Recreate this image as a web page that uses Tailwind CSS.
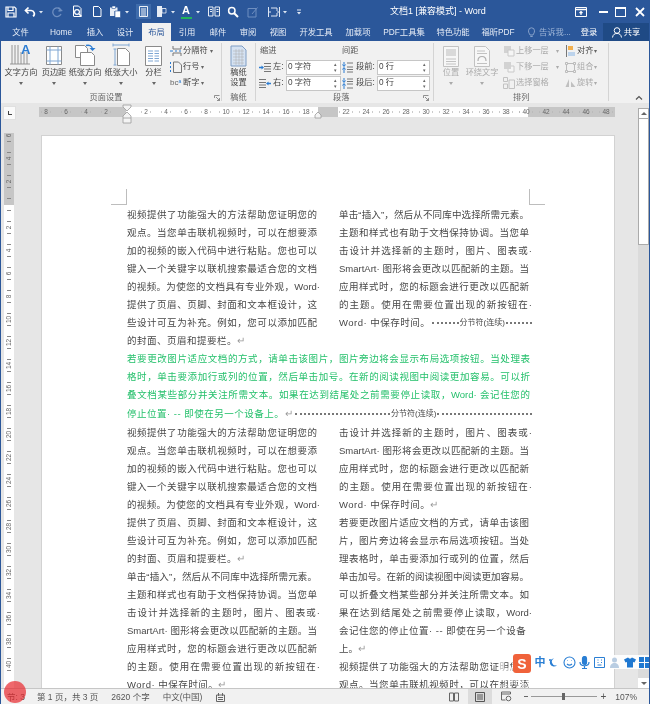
<!DOCTYPE html>
<html lang="zh-CN">
<head>
<meta charset="utf-8">
<title>文档1 - Word</title>
<script src="https://cdn.jsdelivr.net/npm/@tailwindcss/browser@4"></script>
</head>
<body class="m-0 overflow-hidden">
<div class="relative w-[650px] h-[704px] overflow-hidden flex flex-col border-x border-[#2b579a] bg-[#e6e6e6] font-['Liberation_Sans','Noto_Sans_CJK_SC',sans-serif] text-[8px] text-[#444] blur-[0.4px]">

  <!-- title bar -->
  <div class="h-[23px] shrink-0 bg-[#2b579a] flex items-center text-white">
    <svg class="ml-[4px] w-[12px] h-[12px] shrink-0" viewBox="0 0 12 12" fill="none" stroke="#fff" stroke-width="1.2"><path d="M1 1h8.500L11 2.500V11H1z"/><path d="M3 1v3.500h5V1M3 11V7h6v4"/></svg>
    <svg class="ml-[7px] w-[12px] h-[12px] shrink-0" viewBox="0 0 12 12" fill="none" stroke="#fff" stroke-width="1.7"><path d="M4.500 1.500 1.500 4.500l3 3"/><path d="M2 4.500h5a3.200 3.200 0 0 1 2 5.800"/></svg>
    <svg class="ml-[2px] w-[6px] h-[4px] shrink-0" viewBox="0 0 6 4" fill="#dfe7f3"><path d="M1 1h4L3 3.500z"/></svg>
    <svg class="ml-[7px] w-[12px] h-[12px] shrink-0" viewBox="0 0 12 12" fill="none" stroke="#6f8fc0" stroke-width="1.3"><path d="M7.500 1.500l3 3-3 .5"/><path d="M10 4.500A4.300 4.300 0 1 0 10 8"/></svg>
    <svg class="ml-[8px] w-[12px] h-[13px] shrink-0" viewBox="0 0 12 13" fill="none" stroke="#fff"><path d="M2.500 11V1h5l2.500 2.500V11.500H2.500"/><circle cx="6" cy="7" r="2.400" stroke-width="1.200"/><path d="M8 9l2.500 2.500" stroke-width="1.400"/></svg>
    <svg class="ml-[8px] w-[12px] h-[13px] shrink-0" viewBox="0 0 12 13" fill="none" stroke="#fff"><path d="M2.500 11.500V1.500h5l2.500 2.500v7.500z"/></svg>
    <svg class="ml-[6px] w-[12px] h-[13px] shrink-0" viewBox="0 0 12 13"><path d="M1 2.500h7.500V6H5.500v5H1z" fill="#e8edf5"/><rect x="3" y="1" width="3.500" height="2.500" fill="#fff" stroke="#2b579a" stroke-width=".6"/><path d="M6 6h5.500v6.500H6z" fill="#fff" stroke="#2b579a" stroke-width=".6"/></svg>
    <svg class="ml-[3px] w-[6px] h-[4px] shrink-0" viewBox="0 0 6 4" fill="#dfe7f3"><path d="M1 1h4L3 3.500z"/></svg>
    <div class="ml-[6px] w-[15px] h-[15px] shrink-0 bg-[#3f6cab] flex items-center justify-center">
      <svg class="w-[9px] h-[11px]" viewBox="0 0 9 11" fill="none" stroke="#fff" stroke-width=".9"><path d="M.5.500h8v10h-8zM2 3h5M2 5h5M2 7h5M2 9h5"/></svg>
    </div>
    <svg class="ml-[4px] w-[12px] h-[13px] shrink-0" viewBox="0 0 12 13"><path d="M2 1h5v2.500h4V8H7v4H2z" fill="#e6ecf5"/><path d="M7 3.500h4V8H7z" fill="#2b579a" stroke="#fff" stroke-width=".7"/></svg>
    <svg class="ml-[3px] w-[6px] h-[4px] shrink-0" viewBox="0 0 6 4" fill="#dfe7f3"><path d="M1 1h4L3 3.500z"/></svg>
    <div class="ml-[4px] w-[12px] h-[14px] shrink-0 flex flex-col items-center"><span class="text-[11px] leading-[11px] font-bold text-white">A</span><span class="w-[11px] h-[2px] bg-[#21b35a] mt-[1px]"></span></div>
    <svg class="ml-[3px] w-[6px] h-[4px] shrink-0" viewBox="0 0 6 4" fill="#dfe7f3"><path d="M1 1h4L3 3.500z"/></svg>
    <svg class="ml-[7px] w-[12px] h-[11px] shrink-0" viewBox="0 0 12 11" fill="none" stroke="#fff" stroke-width=".9"><path d="M.5 1h4.500v9H.5zM7 1h4.500v9H7zM2 3.500h2M2 5.500h2M8.500 3.500h2M8.500 5.500h2"/></svg>
    <svg class="ml-[7px] w-[12px] h-[12px] shrink-0" viewBox="0 0 12 12" fill="none" stroke="#fff" stroke-width="1.500"><circle cx="4.800" cy="4.800" r="3.200"/><path d="M7.200 7.200 11 11" stroke-width="2"/></svg>
    <svg class="ml-[8px] w-[12px] h-[12px] shrink-0" viewBox="0 0 12 12" fill="none" stroke="#6f8fc0"><path d="M1 2.500h8V11H1zM5 8l5.500-6.500"/></svg>
    <svg class="ml-[9px] w-[12px] h-[12px] shrink-0" viewBox="0 0 12 12" fill="none" stroke="#dfe7f3"><path d="M.5 1v10M11.500 1v10M0 6h3M9 6h3M3 2h6v3M3 10h6V7"/></svg>
    <svg class="ml-[2px] w-[6px] h-[4px] shrink-0" viewBox="0 0 6 4" fill="#dfe7f3"><path d="M1 1h4L3 3.500z"/></svg>
    <svg class="ml-[8px] w-[6px] h-[6px] shrink-0" viewBox="0 0 6 6" fill="#dfe7f3"><path d="M1 .5h4v1H1zM1 3h4L3 5.500z"/></svg>
    <span class="ml-[88px] text-[9px] whitespace-nowrap">文档1 [兼容模式] - Word</span>
    <div class="ml-auto flex items-center shrink-0">
      <svg class="w-[12px] h-[10px]" viewBox="0 0 12 10" fill="none" stroke="#fff"><path d="M.5.500h11v9H.5z"/><path d="M.5 2.500h11" stroke-width="1.500"/><path d="M6 8V4.500M4.500 6 6 4.500 7.500 6" stroke-width="1.200"/></svg>
      <span class="ml-[12px] w-[9px] h-[2px] bg-white"></span>
      <span class="ml-[7px] w-[11px] h-[10px] border border-white border-t-2"></span>
      <svg class="ml-[9px] mr-[4px] w-[10px] h-[10px]" viewBox="0 0 10 10" stroke="#fff" stroke-width="1.800"><path d="M1 1l8 8M9 1 1 9"/></svg>
    </div>
  </div>

  <!-- tabs -->
  <div class="h-[18px] shrink-0 bg-[#2b579a] flex items-stretch text-[8.300px] text-[#e6ecf6] whitespace-nowrap">
    <div class="w-[39px] flex items-center justify-center">文件</div>
    <div class="w-[42px] flex items-center justify-center">Home</div>
    <div class="w-[26px] flex items-center justify-center">插入</div>
    <div class="w-[34px] flex items-center justify-center">设计</div>
    <div class="w-[29px] flex items-center justify-center bg-[#f1f1f1] text-[#2b579a]">布局</div>
    <div class="w-[32px] flex items-center justify-center">引用</div>
    <div class="w-[30px] flex items-center justify-center">邮件</div>
    <div class="w-[30px] flex items-center justify-center">审阅</div>
    <div class="w-[30px] flex items-center justify-center">视图</div>
    <div class="w-[46px] flex items-center justify-center">开发工具</div>
    <div class="w-[38px] flex items-center justify-center">加载项</div>
    <div class="w-[54px] flex items-center justify-center">PDF工具集</div>
    <div class="w-[44px] flex items-center justify-center">特色功能</div>
    <div class="w-[46px] flex items-center justify-center">福昕PDF</div>
    <div class="flex items-center ml-[7px] text-[#9db4d6]">
      <svg class="w-[7px] h-[11px]" viewBox="0 0 7 11" fill="none" stroke="#9db4d6" stroke-width=".8"><path d="M2 8C1.500 6.500.5 6 .5 3.800a3 3 0 0 1 6 0C6.500 6 5.500 6.500 5 8zM2.300 9.500h2.400"/></svg>
      <span class="ml-[4px]">告诉我...</span>
    </div>
    <div class="flex items-center ml-[10px] text-white">登录</div>
    <div class="ml-auto w-[46px] bg-[#1f4a85] flex items-center justify-center text-white">
      <svg class="w-[10px] h-[11px] mr-[2px]" viewBox="0 0 10 11" fill="none" stroke="#fff"><circle cx="5" cy="3.500" r="2.800"/><path d="M.5 10.500c.5-3 2-4 4.500-4s4 1 4.500 4"/></svg>共享
    </div>
  </div>

  <!-- ribbon -->
  <div class="h-[62px] shrink-0 bg-[#f1f1f1] flex text-[8.200px] text-[#444] whitespace-nowrap">
    <!-- page setup -->
    <div class="relative w-[220px] flex flex-col">
      <div class="h-[50px] flex pl-[2px] pt-[2px]">
        <div class="w-[36px] flex flex-col items-center">
          <svg class="w-[22px] h-[25px]" viewBox="0 0 22 25"><g stroke="#8a8a8a" stroke-width=".9"><path d="M2 2v19M5 2v19M8 2v19M11 9v12M14 9v12M17 9v12M0 21h20"/></g><text x="11" y="11" font-size="13" font-weight="700" fill="#2b7cd3" font-family="Liberation Sans">A</text></svg>
          <span class="leading-[10px]">文字方向</span><span class="mt-[4px] w-0 h-0 border-x-[2px] border-t-[3px] border-x-transparent border-t-[#666]"></span>
        </div>
        <div class="w-[30px] flex flex-col items-center">
          <svg class="w-[18px] h-[25px]" viewBox="0 0 18 25" fill="none"><path d="M1.500 3.500h15v18h-15z" fill="#fff" stroke="#8a8a8a"/><path d="M1.500 7h15M1.500 18h15M5 3.500v18M13 3.500v18" stroke="#7ea6d3"/></svg>
          <span class="leading-[10px]">页边距</span><span class="mt-[4px] w-0 h-0 border-x-[2px] border-t-[3px] border-x-transparent border-t-[#666]"></span>
        </div>
        <div class="w-[32px] flex flex-col items-center">
          <svg class="w-[22px] h-[25px]" viewBox="0 0 22 25" fill="none"><path d="M1.500 2.500h9l3 3v9h-12z" fill="#fff" stroke="#8a8a8a"/><path d="M6.500 9.500h11l3 3v10h-14z" fill="#fff" stroke="#8a8a8a"/><path d="M12 2.500c3.500-1 6 .5 6.500 3.500" stroke="#2b7cd3" stroke-width="1.400"/><path d="M15.500 5l3 3 3-3z" fill="#2b7cd3"/></svg>
          <span class="leading-[10px]">纸张方向</span><span class="mt-[4px] w-0 h-0 border-x-[2px] border-t-[3px] border-x-transparent border-t-[#666]"></span>
        </div>
        <div class="w-[40px] flex flex-col items-center">
          <svg class="w-[20px] h-[25px]" viewBox="0 0 20 25" fill="none"><path d="M6.500 5.500h8l4 4v13h-12z" fill="#fff" stroke="#8a8a8a"/><path d="M4 6v16M2.500 6h3M2.500 22h3M2 2h16M2 .5v3M18 .5v3" stroke="#7ea6d3"/></svg>
          <span class="leading-[10px]">纸张大小</span><span class="mt-[4px] w-0 h-0 border-x-[2px] border-t-[3px] border-x-transparent border-t-[#666]"></span>
        </div>
        <div class="w-[25px] flex flex-col items-center">
          <svg class="w-[17px] h-[25px]" viewBox="0 0 17 25" fill="none"><path d="M.5 3.500h16v19H.5z" fill="#fff" stroke="#8a8a8a"/><path d="M3 8h5M9.500 8H14M3 10.500h5M9.500 10.500H14M3 13h5M9.500 13H14M3 15.500h5M9.500 15.500H14M3 18h5M9.500 18H14" stroke="#7ea6d3"/></svg>
          <span class="leading-[10px]">分栏</span><span class="mt-[4px] w-0 h-0 border-x-[2px] border-t-[3px] border-x-transparent border-t-[#666]"></span>
        </div>
        <div class="flex flex-col pl-[4px]">
          <div class="h-[16px] flex items-center"><svg class="w-[12px] h-[12px] mr-[1px]" viewBox="0 0 12 12" fill="none" stroke="#777"><path d="M3 1v3h8V1M3 11V8h8v3"/><path d="M0 6h3M5 6h2M9 6h2" stroke="#2b7cd3"/></svg>分隔符<span class="ml-[2px] text-[#666] text-[6px]">▾</span></div>
          <div class="h-[16px] flex items-center"><svg class="w-[12px] h-[12px] mr-[1px]" viewBox="0 0 12 12" fill="none"><path d="M.5 1v2M.5 5v2M.5 9v2" stroke="#2b7cd3"/><path d="M3.500 1h5l3 3v7.500h-8z" stroke="#777"/></svg>行号<span class="ml-[2px] text-[#666] text-[6px]">▾</span></div>
          <div class="h-[16px] flex items-center"><span class="w-[12px] mr-[1px] text-[8px] leading-[10px] text-[#666]">bc<sup class="text-[5px] text-[#2b7cd3]">a</sup></span>断字<span class="ml-[2px] text-[#666] text-[6px]">▾</span></div>
        </div>
      </div>
      <div class="h-[12px] leading-[14px] text-center text-[#666] pr-[10px]">页面设置</div>
      <svg class="absolute right-[1px] bottom-[2px] w-[6px] h-[6px]" viewBox="0 0 6 6" fill="none" stroke="#777" stroke-width=".8"><path d="M.5 3V.5H5.500M2 2l3.500 3.500M3 5.500h2.500V3"/></svg>
    </div>
    <div class="w-px my-[2px] bg-[#d4d4d4]"></div>
    <!-- gaozhi -->
    <div class="w-[33px] flex flex-col">
      <div class="h-[50px] flex flex-col items-center pt-[4px]">
        <svg class="w-[17px] h-[22px]" viewBox="0 0 17 22"><path d="M1 1h11l4 4v16H1z" fill="#d5e2f2" stroke="#7f9dc4"/><path d="M3 6h11M3 9h11M3 12h11M3 15h11M3 18h11M6 4v16M9 4v16M12 4v16" stroke="#a9a9a9" stroke-width=".5"/></svg>
        <span class="leading-[10px] mt-[1px]">稿纸</span><span class="leading-[10px]">设置</span>
      </div>
      <div class="h-[12px] leading-[14px] text-center text-[#666]">稿纸</div>
    </div>
    <div class="w-px my-[2px] bg-[#d4d4d4]"></div>
    <!-- paragraph -->
    <div class="relative w-[177px] flex flex-col">
      <div class="h-[50px] flex">
        <div class="w-[86px] pl-[3px]">
          <div class="h-[18px] leading-[17px] pt-[1px] pl-[1px] text-[#555]">缩进</div>
          <div class="h-[16px] flex items-center">
            <svg class="w-[12px] h-[9px] mr-[2px]" viewBox="0 0 12 9" fill="none" stroke="#777"><path d="M5 .5h7M5 3.500h7M5 6h7M5 8.500h7"/><path d="M0 4.500h3" stroke="#2b7cd3" stroke-width="1.500"/><path d="M2.500 2.500v4L5 4.500z" fill="#2b7cd3" stroke="none"/></svg>
            <span class="w-[13px]">左:</span>
            <div class="w-[55px] h-[15px] bg-white border border-[#c6c6c6] flex items-center justify-between pl-[1px] pr-[3px]"><span>0 字符</span><span class="text-[5px] leading-[6px] text-[#666] flex flex-col"><span>▴</span><span>▾</span></span></div>
          </div>
          <div class="h-[16px] flex items-center">
            <svg class="w-[12px] h-[9px] mr-[2px]" viewBox="0 0 12 9" fill="none" stroke="#777"><path d="M0 .5h7M0 3.500h7M0 6h7M0 8.500h7"/><path d="M9 4.500h3" stroke="#2b7cd3" stroke-width="1.500"/><path d="M9.500 2.500v4L7 4.500z" fill="#2b7cd3" stroke="none"/></svg>
            <span class="w-[13px]">右:</span>
            <div class="w-[55px] h-[15px] bg-white border border-[#c6c6c6] flex items-center justify-between pl-[1px] pr-[3px]"><span>0 字符</span><span class="text-[5px] leading-[6px] text-[#666] flex flex-col"><span>▴</span><span>▾</span></span></div>
          </div>
        </div>
        <div class="w-[90px]">
          <div class="h-[18px] leading-[17px] pt-[1px] text-[#555]">间距</div>
          <div class="h-[16px] flex items-center">
            <svg class="w-[11px] h-[11px] mr-[3px]" viewBox="0 0 11 11" fill="none"><path d="M5 1h6M5 5h6M5 7.500h6M5 10h6" stroke="#777"/><path d="M2 0v4M.5 2.500 2 4.500l1.500-2M2 6v5M.5 7.500 2 5.500l1.500 2" stroke="#2b7cd3"/></svg>
            <span class="w-[21px]">段前:</span>
            <div class="w-[53px] h-[15px] bg-white border border-[#c6c6c6] flex items-center justify-between pl-[1px] pr-[3px]"><span>0 行</span><span class="text-[5px] leading-[6px] text-[#666] flex flex-col"><span>▴</span><span>▾</span></span></div>
          </div>
          <div class="h-[16px] flex items-center">
            <svg class="w-[11px] h-[11px] mr-[3px]" viewBox="0 0 11 11" fill="none"><path d="M5 1h6M5 3.500h6M5 6h6M5 10h6" stroke="#777"/><path d="M2 0v4M.5 2.500 2 4.500l1.500-2M2 6v5M.5 7.500 2 5.500l1.500 2" stroke="#2b7cd3"/></svg>
            <span class="w-[21px]">段后:</span>
            <div class="w-[53px] h-[15px] bg-white border border-[#c6c6c6] flex items-center justify-between pl-[1px] pr-[3px]"><span>0 行</span><span class="text-[5px] leading-[6px] text-[#666] flex flex-col"><span>▴</span><span>▾</span></span></div>
          </div>
        </div>
      </div>
      <div class="h-[12px] leading-[14px] pl-[77px] text-[#666]">段落</div>
      <svg class="absolute right-[4px] bottom-[2px] w-[6px] h-[6px]" viewBox="0 0 6 6" fill="none" stroke="#777" stroke-width=".8"><path d="M.5 3V.5H5.500M2 2l3.500 3.500M3 5.500h2.500V3"/></svg>
    </div>
    <div class="w-px my-[2px] bg-[#d4d4d4]"></div>
    <!-- arrange -->
    <div class="w-[174px] flex flex-col">
      <div class="h-[50px] flex text-[#ababab]">
        <div class="w-[34px] flex flex-col items-center pt-[5px]">
          <svg class="w-[16px] h-[21px]" viewBox="0 0 16 21" fill="none"><path d="M.5.500h15v20H.5z" fill="#f7f7f7" stroke="#c2c2c2"/><path d="M3 3h10v7H3z" fill="#d9d9d9"/><path d="M3 13h10M3 15.500h10M3 18h10" stroke="#c2c2c2"/></svg>
          <span class="leading-[10px] mt-[1px]">位置</span><span class="mt-[4px] w-0 h-0 border-x-[2px] border-t-[3px] border-x-transparent border-t-[#aaa]"></span>
        </div>
        <div class="w-[28px] flex flex-col items-center pt-[5px]">
          <svg class="w-[16px] h-[21px]" viewBox="0 0 16 21" fill="none"><path d="M.5.500h11l4 4v16H.5z" fill="#f7f7f7" stroke="#c2c2c2"/><path d="M3 5h8M3 7.500h10M3 17.500h10" stroke="#c2c2c2"/><path d="M4 15c0-6 8-6 8 0" stroke="#b0b0b0" stroke-width="1.200"/></svg>
          <span class="leading-[10px] mt-[1px]">环绕文字</span><span class="mt-[4px] w-0 h-0 border-x-[2px] border-t-[3px] border-x-transparent border-t-[#aaa]"></span>
        </div>
        <div class="w-[67px] pl-[7px] pt-[2px]">
          <div class="h-[16px] flex items-center"><svg class="w-[12px] h-[12px] mr-[1px]" viewBox="0 0 12 12"><path d="M1 1h7v7H1z" fill="#d2d2d2"/><path d="M5 5h6v6H5z" fill="#f5f5f5" stroke="#c9c9c9"/></svg>上移一层<span class="ml-[7px] text-[6px]">▾</span></div>
          <div class="h-[16px] flex items-center"><svg class="w-[12px] h-[12px] mr-[1px]" viewBox="0 0 12 12"><path d="M5 5h6v6H5z" fill="#f5f5f5" stroke="#c9c9c9"/><path d="M1 1h7v7H1z" fill="#d2d2d2"/></svg>下移一层<span class="ml-[7px] text-[6px]">▾</span></div>
          <div class="h-[16px] flex items-center"><svg class="w-[12px] h-[12px] mr-[1px]" viewBox="0 0 12 12" fill="none" stroke="#c2c2c2"><path d="M.5.500h4v4h-4zM.5 7h4v4.500h-4zM6 3h5.500v8.500H6z"/></svg>选择窗格</div>
        </div>
        <div class="flex-1 pl-[3px] pt-[2px]">
          <div class="h-[16px] flex items-center text-[#444]"><svg class="w-[9px] h-[12px] mr-[2px]" viewBox="0 0 9 12"><path d="M.5 0v12" stroke="#777"/><path d="M2 1h5v4H2z" fill="#f2b04f"/><path d="M2 7h7v4H2z" fill="#bcd3ec"/></svg>对齐<span class="ml-[1px] text-[6px] text-[#666]">▾</span></div>
          <div class="h-[16px] flex items-center"><svg class="w-[11px] h-[11px] mr-[1px] -ml-[1px]" viewBox="0 0 11 11" fill="none" stroke="#bbb"><path d="M.5.500h2v2h-2zM8.500.500h2v2h-2zM.5 8.500h2v2h-2zM8.500 8.500h2v2h-2zM2.500 1.500h6M2.500 9.500h6M1.500 2.500v6M9.500 2.500v6"/></svg>组合<span class="ml-[1px] text-[6px]">▾</span></div>
          <div class="h-[16px] flex items-center"><svg class="w-[11px] h-[11px] mr-[1px] -ml-[1px]" viewBox="0 0 11 11" fill="#c0c0c0"><path d="M4 1v8H.5zM6 3.500l4.500 5.500H6z"/></svg>旋转<span class="ml-[1px] text-[6px]">▾</span></div>
        </div>
      </div>
      <div class="h-[12px] leading-[14px] pl-[79px] text-[#666]">排列</div>
    </div>
    <div class="w-px my-[2px] bg-[#d4d4d4]"></div>
    <div class="flex-1 flex items-end justify-end pr-[6px] pb-[3px]">
      <svg class="w-[8px] h-[5px]" viewBox="0 0 8 5" fill="none" stroke="#555" stroke-width="1.200"><path d="M1 4.500l3-3 3 3"/></svg>
    </div>
  </div>

  <!-- workspace -->
  <div class="flex-1 min-h-0 flex">
    <div class="w-[637px] flex flex-col min-h-0">
      <!-- horizontal ruler row -->
      <div class="h-[22px] shrink-0 flex items-start pt-[4px]">
        <div class="ml-[2px] -mt-[1px] w-[13px] h-[14px] bg-[#fafafa] border border-[#e0e0e0] flex items-center justify-center">
          <span class="w-[4px] h-[4px] border-l border-b border-[#444]"></span>
        </div>
        <div class="relative ml-[23px] w-[576px] h-[10px] overflow-hidden flex text-[6.500px] text-[#666] bg-[linear-gradient(90deg,#c6c6c6_87px,#fff_87px,#fff_279px,#c6c6c6_279px,#c6c6c6_299px,#fff_299px,#fff_489px,#c6c6c6_489px)]">
          <div class="-ml-[3px] flex">
            <div class="w-[20px] flex items-center justify-between px-[5px]"><i class="w-px h-[2px] bg-[#bbb]"></i>8<i class="w-px h-[2px] bg-[#bbb]"></i></div>
            <div class="w-[20px] flex items-center justify-between px-[5px]"><i class="w-px h-[2px] bg-[#bbb]"></i>6<i class="w-px h-[2px] bg-[#bbb]"></i></div>
            <div class="w-[20px] flex items-center justify-between px-[5px]"><i class="w-px h-[2px] bg-[#bbb]"></i>4<i class="w-px h-[2px] bg-[#bbb]"></i></div>
            <div class="w-[20px] flex items-center justify-between px-[5px]"><i class="w-px h-[2px] bg-[#bbb]"></i>2<i class="w-px h-[2px] bg-[#bbb]"></i></div>
            <div class="w-[20px]"></div>
            <div class="w-[20px] flex items-center justify-between px-[5px]"><i class="w-px h-[2px] bg-[#ccc]"></i>2<i class="w-px h-[2px] bg-[#ccc]"></i></div>
            <div class="w-[20px] flex items-center justify-between px-[5px]"><i class="w-px h-[2px] bg-[#ccc]"></i>4<i class="w-px h-[2px] bg-[#ccc]"></i></div>
            <div class="w-[20px] flex items-center justify-between px-[5px]"><i class="w-px h-[2px] bg-[#ccc]"></i>6<i class="w-px h-[2px] bg-[#ccc]"></i></div>
            <div class="w-[20px] flex items-center justify-between px-[5px]"><i class="w-px h-[2px] bg-[#ccc]"></i>8<i class="w-px h-[2px] bg-[#ccc]"></i></div>
            <div class="w-[20px] flex items-center justify-between px-[3px]"><i class="w-px h-[2px] bg-[#ccc]"></i>10<i class="w-px h-[2px] bg-[#ccc]"></i></div>
            <div class="w-[20px] flex items-center justify-between px-[3px]"><i class="w-px h-[2px] bg-[#ccc]"></i>12<i class="w-px h-[2px] bg-[#ccc]"></i></div>
            <div class="w-[20px] flex items-center justify-between px-[3px]"><i class="w-px h-[2px] bg-[#ccc]"></i>14<i class="w-px h-[2px] bg-[#ccc]"></i></div>
            <div class="w-[20px] flex items-center justify-between px-[3px]"><i class="w-px h-[2px] bg-[#ccc]"></i>16<i class="w-px h-[2px] bg-[#ccc]"></i></div>
            <div class="w-[20px] flex items-center justify-between px-[3px]"><i class="w-px h-[2px] bg-[#ccc]"></i>18<i class="w-px h-[2px] bg-[#ccc]"></i></div>
            <div class="w-[20px]"></div>
            <div class="w-[20px] flex items-center justify-between px-[3px]"><i class="w-px h-[2px] bg-[#ccc]"></i>22<i class="w-px h-[2px] bg-[#ccc]"></i></div>
            <div class="w-[20px] flex items-center justify-between px-[3px]"><i class="w-px h-[2px] bg-[#ccc]"></i>24<i class="w-px h-[2px] bg-[#ccc]"></i></div>
            <div class="w-[20px] flex items-center justify-between px-[3px]"><i class="w-px h-[2px] bg-[#ccc]"></i>26<i class="w-px h-[2px] bg-[#ccc]"></i></div>
            <div class="w-[20px] flex items-center justify-between px-[3px]"><i class="w-px h-[2px] bg-[#ccc]"></i>28<i class="w-px h-[2px] bg-[#ccc]"></i></div>
            <div class="w-[20px] flex items-center justify-between px-[3px]"><i class="w-px h-[2px] bg-[#ccc]"></i>30<i class="w-px h-[2px] bg-[#ccc]"></i></div>
            <div class="w-[20px] flex items-center justify-between px-[3px]"><i class="w-px h-[2px] bg-[#ccc]"></i>32<i class="w-px h-[2px] bg-[#ccc]"></i></div>
            <div class="w-[20px] flex items-center justify-between px-[3px]"><i class="w-px h-[2px] bg-[#ccc]"></i>34<i class="w-px h-[2px] bg-[#ccc]"></i></div>
            <div class="w-[20px] flex items-center justify-between px-[3px]"><i class="w-px h-[2px] bg-[#ccc]"></i>36<i class="w-px h-[2px] bg-[#ccc]"></i></div>
            <div class="w-[20px] flex items-center justify-between px-[3px]"><i class="w-px h-[2px] bg-[#ccc]"></i>38<i class="w-px h-[2px] bg-[#ccc]"></i></div>
            <div class="w-[20px] flex items-center justify-between px-[3px]"><i class="w-px h-[2px] bg-[#bbb]"></i>40<i class="w-px h-[2px] bg-[#bbb]"></i></div>
            <div class="w-[20px] flex items-center justify-between px-[3px]"><i class="w-px h-[2px] bg-[#bbb]"></i>42<i class="w-px h-[2px] bg-[#bbb]"></i></div>
            <div class="w-[20px] flex items-center justify-between px-[3px]"><i class="w-px h-[2px] bg-[#bbb]"></i>44<i class="w-px h-[2px] bg-[#bbb]"></i></div>
            <div class="w-[20px] flex items-center justify-between px-[3px]"><i class="w-px h-[2px] bg-[#bbb]"></i>46<i class="w-px h-[2px] bg-[#bbb]"></i></div>
            <div class="w-[20px] flex items-center justify-between px-[3px]"><i class="w-px h-[2px] bg-[#bbb]"></i>48<i class="w-px h-[2px] bg-[#bbb]"></i></div>
          </div>
        </div>
        <!-- indent markers over the ruler -->
        <svg class="absolute left-[121px] top-[104px] w-[10px] h-[20px]" viewBox="0 0 10 20" fill="#f4f4f4" stroke="#9a9a9a" stroke-width=".8"><path d="M1 1h8v2L5 7 1 3zM5 8l4 4v7H1v-7z"/><path d="M1 14h8"/></svg>
        <svg class="absolute left-[313px] top-[108px] w-[8px] h-[12px]" viewBox="0 0 8 12" fill="#f4f4f4" stroke="#9a9a9a" stroke-width=".8"><path d="M4 4l3 3v3H1V7z"/></svg>
      </div>

      <!-- doc area -->
      <div class="flex-1 min-h-0 flex overflow-hidden">
        <!-- vertical ruler -->
        <div class="w-[40px] shrink-0 pl-[3px] pt-[8px]">
          <div class="w-[10px] h-[560px] overflow-hidden text-[6.500px] text-[#666] bg-[linear-gradient(#c6c6c6_72px,#fff_72px)]">
            <div class="-mt-[9px] flex flex-col">
              <div class="h-[23px] flex flex-col items-center justify-between py-[5px]"><i class="w-[4px] h-px bg-[#888]"></i><span class="-rotate-90 leading-[7px]">6</span><i class="w-[4px] h-px bg-[#888]"></i></div>
              <div class="h-[23px] flex flex-col items-center justify-between py-[5px]"><i class="w-[4px] h-px bg-[#888]"></i><span class="-rotate-90 leading-[7px]">4</span><i class="w-[4px] h-px bg-[#888]"></i></div>
              <div class="h-[23px] flex flex-col items-center justify-between py-[5px]"><i class="w-[4px] h-px bg-[#888]"></i><span class="-rotate-90 leading-[7px]">2</span><i class="w-[4px] h-px bg-[#888]"></i></div>
              <div class="h-[23px] flex flex-col items-center justify-between py-[5px]"><i class="w-[4px] h-px bg-[#888]"></i><i class="w-[4px] h-px bg-[#888]"></i></div>
              <div class="h-[23px] flex flex-col items-center justify-between py-[5px]"><i class="w-[4px] h-px bg-[#888]"></i><span class="-rotate-90 leading-[7px]">2</span><i class="w-[4px] h-px bg-[#888]"></i></div>
              <div class="h-[23px] flex flex-col items-center justify-between py-[5px]"><i class="w-[4px] h-px bg-[#888]"></i><span class="-rotate-90 leading-[7px]">4</span><i class="w-[4px] h-px bg-[#888]"></i></div>
              <div class="h-[23px] flex flex-col items-center justify-between py-[5px]"><i class="w-[4px] h-px bg-[#888]"></i><span class="-rotate-90 leading-[7px]">6</span><i class="w-[4px] h-px bg-[#888]"></i></div>
              <div class="h-[23px] flex flex-col items-center justify-between py-[5px]"><i class="w-[4px] h-px bg-[#888]"></i><span class="-rotate-90 leading-[7px]">8</span><i class="w-[4px] h-px bg-[#888]"></i></div>
              <div class="h-[23px] flex flex-col items-center justify-between py-[5px]"><i class="w-[4px] h-px bg-[#888]"></i><span class="-rotate-90 leading-[7px]">10</span><i class="w-[4px] h-px bg-[#888]"></i></div>
              <div class="h-[23px] flex flex-col items-center justify-between py-[5px]"><i class="w-[4px] h-px bg-[#888]"></i><span class="-rotate-90 leading-[7px]">12</span><i class="w-[4px] h-px bg-[#888]"></i></div>
              <div class="h-[23px] flex flex-col items-center justify-between py-[5px]"><i class="w-[4px] h-px bg-[#888]"></i><span class="-rotate-90 leading-[7px]">14</span><i class="w-[4px] h-px bg-[#888]"></i></div>
              <div class="h-[23px] flex flex-col items-center justify-between py-[5px]"><i class="w-[4px] h-px bg-[#888]"></i><span class="-rotate-90 leading-[7px]">16</span><i class="w-[4px] h-px bg-[#888]"></i></div>
              <div class="h-[23px] flex flex-col items-center justify-between py-[5px]"><i class="w-[4px] h-px bg-[#888]"></i><span class="-rotate-90 leading-[7px]">18</span><i class="w-[4px] h-px bg-[#888]"></i></div>
              <div class="h-[23px] flex flex-col items-center justify-between py-[5px]"><i class="w-[4px] h-px bg-[#888]"></i><span class="-rotate-90 leading-[7px]">20</span><i class="w-[4px] h-px bg-[#888]"></i></div>
              <div class="h-[23px] flex flex-col items-center justify-between py-[5px]"><i class="w-[4px] h-px bg-[#888]"></i><span class="-rotate-90 leading-[7px]">22</span><i class="w-[4px] h-px bg-[#888]"></i></div>
              <div class="h-[23px] flex flex-col items-center justify-between py-[5px]"><i class="w-[4px] h-px bg-[#888]"></i><span class="-rotate-90 leading-[7px]">24</span><i class="w-[4px] h-px bg-[#888]"></i></div>
              <div class="h-[23px] flex flex-col items-center justify-between py-[5px]"><i class="w-[4px] h-px bg-[#888]"></i><span class="-rotate-90 leading-[7px]">26</span><i class="w-[4px] h-px bg-[#888]"></i></div>
              <div class="h-[23px] flex flex-col items-center justify-between py-[5px]"><i class="w-[4px] h-px bg-[#888]"></i><span class="-rotate-90 leading-[7px]">28</span><i class="w-[4px] h-px bg-[#888]"></i></div>
              <div class="h-[23px] flex flex-col items-center justify-between py-[5px]"><i class="w-[4px] h-px bg-[#888]"></i><span class="-rotate-90 leading-[7px]">30</span><i class="w-[4px] h-px bg-[#888]"></i></div>
              <div class="h-[23px] flex flex-col items-center justify-between py-[5px]"><i class="w-[4px] h-px bg-[#888]"></i><span class="-rotate-90 leading-[7px]">32</span><i class="w-[4px] h-px bg-[#888]"></i></div>
              <div class="h-[23px] flex flex-col items-center justify-between py-[5px]"><i class="w-[4px] h-px bg-[#888]"></i><span class="-rotate-90 leading-[7px]">34</span><i class="w-[4px] h-px bg-[#888]"></i></div>
              <div class="h-[23px] flex flex-col items-center justify-between py-[5px]"><i class="w-[4px] h-px bg-[#888]"></i><span class="-rotate-90 leading-[7px]">36</span><i class="w-[4px] h-px bg-[#888]"></i></div>
              <div class="h-[23px] flex flex-col items-center justify-between py-[5px]"><i class="w-[4px] h-px bg-[#888]"></i><span class="-rotate-90 leading-[7px]">38</span><i class="w-[4px] h-px bg-[#888]"></i></div>
              <div class="h-[23px] flex flex-col items-center justify-between py-[5px]"><i class="w-[4px] h-px bg-[#888]"></i><span class="-rotate-90 leading-[7px]">40</span><i class="w-[4px] h-px bg-[#888]"></i></div>
            </div>
          </div>
        </div>

        <!-- page -->
        <div class="w-[574px] shrink-0 mt-[10px]">
          <div class="relative h-[900px] bg-white border border-[#d2d2d2] pt-[70px] pl-[85px] text-[9.500px] text-[#484848] whitespace-nowrap [&_div]:leading-[18px]">
            <!-- crop marks -->
            <span class="absolute left-[69px] top-[53px] w-[16px] h-[16px] border-r border-b border-[#bdbdbd]"></span>
            <span class="absolute left-[487px] top-[53px] w-[16px] h-[16px] border-l border-b border-[#bdbdbd]"></span>

            <!-- section 1 -->
            <div class="flex gap-[22px]">
              <div class="w-[190px] [text-align-last:justify]">
                <div class="h-[18px]">视频提供了功能强大的方法帮助您证明您的</div>
                <div class="h-[18px]">观点。当您单击联机视频时，可以在想要添</div>
                <div class="h-[18px]">加的视频的嵌入代码中进行粘贴。您也可以</div>
                <div class="h-[18px]">键入一个关键字以联机搜索最适合您的文档</div>
                <div class="h-[18px] w-[193px]">的视频。为使您的文档具有专业外观，Word·</div>
                <div class="h-[18px]">提供了页眉、页脚、封面和文本框设计，这</div>
                <div class="h-[18px]">些设计可互为补充。例如，您可以添加匹配</div>
                <div class="h-[18px] [text-align-last:left] tracking-[0.5px]">的封面、页眉和提要栏。<span class="text-[#999]">↵</span></div>
              </div>
              <div class="w-[190px] [text-align-last:justify]">
                <div class="h-[18px]">单击“插入”，然后从不同库中选择所需元素。</div>
                <div class="h-[18px]">主题和样式也有助于文档保持协调。当您单</div>
                <div class="h-[18px] w-[193px]">击设计并选择新的主题时，图片、图表或·</div>
                <div class="h-[18px]">SmartArt· 图形将会更改以匹配新的主题。当</div>
                <div class="h-[18px]">应用样式时，您的标题会进行更改以匹配新</div>
                <div class="h-[18px] w-[193px]">的主题。使用在需要位置出现的新按钮在·</div>
                <div class="h-[18px] w-[193px] flex items-center [text-align-last:left]"><span class="tracking-[0.5px]">Word· 中保存时间。</span><span class="ml-[2px] flex-1 border-t-2 border-dotted border-[#777]"></span><span class="text-[8px] mx-[1px]">分节符(连续)</span><span class="flex-1 border-t-2 border-dotted border-[#777]"></span></div>
              </div>
            </div>

            <!-- section 2 -->
            <div class="w-[403px] text-[#25c06c] [text-align-last:justify]">
              <div class="h-[18px]">若要更改图片适应文档的方式，请单击该图片，图片旁边将会显示布局选项按钮。当处理表</div>
              <div class="h-[18px]">格时，单击要添加行或列的位置，然后单击加号。在新的阅读视图中阅读更加容易。可以折</div>
              <div class="h-[18px]">叠文档某些部分并关注所需文本。如果在达到结尾处之前需要停止读取，Word· 会记住您的</div>
              <div class="h-[19px] w-[405px] flex items-center [text-align-last:left]"><span class="tracking-[0.5px]">停止位置· -- 即使在另一个设备上。</span><span class="text-[#999] ml-[1px]">↵</span><span class="ml-[2px] flex-1 border-t-2 border-dotted border-[#777]"></span><span class="text-[8px] text-[#484848] mx-[1px]">分节符(连续)</span><span class="flex-1 border-t-2 border-dotted border-[#777]"></span></div>
            </div>

            <!-- section 3 -->
            <div class="flex gap-[22px] mt-[1px]">
              <div class="w-[190px] [text-align-last:justify]">
                <div class="h-[18px]">视频提供了功能强大的方法帮助您证明您的</div>
                <div class="h-[18px]">观点。当您单击联机视频时，可以在想要添</div>
                <div class="h-[18px]">加的视频的嵌入代码中进行粘贴。您也可以</div>
                <div class="h-[18px]">键入一个关键字以联机搜索最适合您的文档</div>
                <div class="h-[18px] w-[193px]">的视频。为使您的文档具有专业外观，Word·</div>
                <div class="h-[18px]">提供了页眉、页脚、封面和文本框设计，这</div>
                <div class="h-[18px]">些设计可互为补充。例如，您可以添加匹配</div>
                <div class="h-[18px] [text-align-last:left] tracking-[0.5px]">的封面、页眉和提要栏。<span class="text-[#999]">↵</span></div>
                <div class="h-[18px]">单击“插入”，然后从不同库中选择所需元素。</div>
                <div class="h-[18px]">主题和样式也有助于文档保持协调。当您单</div>
                <div class="h-[18px] w-[193px]">击设计并选择新的主题时，图片、图表或·</div>
                <div class="h-[18px]">SmartArt· 图形将会更改以匹配新的主题。当</div>
                <div class="h-[18px]">应用样式时，您的标题会进行更改以匹配新</div>
                <div class="h-[18px] w-[193px]">的主题。使用在需要位置出现的新按钮在·</div>
                <div class="h-[18px] [text-align-last:left] tracking-[0.5px]">Word· 中保存时间。<span class="text-[#999]">↵</span></div>
              </div>
              <div class="w-[190px] [text-align-last:justify]">
                <div class="h-[18px] w-[193px]">击设计并选择新的主题时，图片、图表或·</div>
                <div class="h-[18px]">SmartArt· 图形将会更改以匹配新的主题。当</div>
                <div class="h-[18px]">应用样式时，您的标题会进行更改以匹配新</div>
                <div class="h-[18px] w-[193px]">的主题。使用在需要位置出现的新按钮在·</div>
                <div class="h-[18px] [text-align-last:left] tracking-[0.5px]">Word· 中保存时间。<span class="text-[#999]">↵</span></div>
                <div class="h-[18px]">若要更改图片适应文档的方式，请单击该图</div>
                <div class="h-[18px]">片，图片旁边将会显示布局选项按钮。当处</div>
                <div class="h-[18px]">理表格时，单击要添加行或列的位置，然后</div>
                <div class="h-[18px]">单击加号。在新的阅读视图中阅读更加容易。</div>
                <div class="h-[18px]">可以折叠文档某些部分并关注所需文本。如</div>
                <div class="h-[18px] w-[193px]">果在达到结尾处之前需要停止读取，Word·</div>
                <div class="h-[18px] [text-align-last:left] tracking-[0.5px]">会记住您的停止位置· -- 即使在另一个设备</div>
                <div class="h-[18px] [text-align-last:left]">上。<span class="text-[#999]">↵</span></div>
                <div class="h-[18px]">视频提供了功能强大的方法帮助您证明您的</div>
                <div class="h-[18px]">观点。当您单击联机视频时，可以在想要添</div>
              </div>
            </div>
          </div>
        </div>
      </div>
    </div>

    <!-- scrollbar -->
    <div class="w-[11px] shrink-0 flex flex-col pt-[5px] bg-[linear-gradient(#e6e6e6_121px,#dbdbdb_121px)]">
      <div class="h-[11px] bg-white border border-[#ababab] flex items-center justify-center"><span class="w-0 h-0 border-x-[3px] border-b-[3px] border-x-transparent border-b-[#666]"></span></div>
      <div class="h-[126px] bg-white border-x border-b border-[#ababab]"></div>
      <div class="flex-1"></div>
      <div class="h-[10px] bg-white flex items-center justify-center"><span class="w-0 h-0 border-x-[3px] border-t-[3px] border-x-transparent border-t-[#666]"></span></div>
    </div>
  </div>

  <!-- status bar -->
  <div class="h-[16px] shrink-0 bg-[#f1f1f1] border-t border-[#c6c6c6] flex items-center text-[8.500px] leading-[12px] text-[#555] whitespace-nowrap">
    <span class="ml-[6px]">节: 3</span>
    <span class="ml-[12px]">第 1 页，共 3 页</span>
    <span class="ml-[13px]">2620 个字</span>
    <span class="ml-[13px]">中文(中国)</span>
    <svg class="ml-[14px] w-[9px] h-[10px]" viewBox="0 0 9 10" fill="none" stroke="#666"><path d="M.5 3h8v6.500h-8zM2.500 1v3M6.500 1v3M2 5.500h5M2 7.500h5"/></svg>
    <div class="ml-auto flex items-center h-full">
      <svg class="w-[10px] h-[10px]" viewBox="0 0 10 10" fill="none" stroke="#666"><path d="M.5 1h4v8h-4zM5.500 1h4v8h-4z"/></svg>
      <div class="ml-[9px] w-[24px] h-full bg-[#dcdcdc] flex items-center justify-center">
        <svg class="w-[10px] h-[10px]" viewBox="0 0 10 10" fill="none" stroke="#555"><path d="M.5.500h9v9h-9zM2 3h6M2 5h6M2 7h6"/></svg>
      </div>
      <svg class="ml-[9px] w-[11px] h-[11px]" viewBox="0 0 11 11" fill="none" stroke="#666"><path d="M.5 1h9v2h-9zM.5 3v6h4"/><circle cx="7.500" cy="7.500" r="2.300"/></svg>
      <span class="ml-[12px] w-[4px] h-px bg-[#666]"></span>
      <div class="relative ml-[3px] w-[66px] h-px bg-[#999] flex justify-center"><span class="absolute -top-[3px] left-[31px] w-[3px] h-[7px] bg-[#666]"></span></div>
      <span class="ml-[3px] text-[10px] leading-[10px] text-[#555]">+</span>
      <span class="ml-[9px] mr-[12px]">107%</span>
    </div>
  </div>

  <!-- watermark -->
  <svg class="absolute left-[545px] top-[636px] w-[36px] h-[36px]" viewBox="0 0 36 36" fill="#fff" opacity=".55"><ellipse cx="8" cy="15" rx="4" ry="5"/><ellipse cx="15" cy="7" rx="4" ry="5"/><ellipse cx="24" cy="7" rx="4" ry="5"/><ellipse cx="31" cy="15" rx="4" ry="5"/><path d="M8 28c0-8 6-13 11-13s11 5 11 13c0 5-7 4-11 3-4 1-11 2-11-3z"/></svg>
  <div class="absolute left-[497px] top-[646px] text-[30px] leading-[30px] font-bold text-white/60 whitespace-nowrap">Bai</div>
  <div class="absolute left-[503px] top-[674px] text-[12px] leading-[14px] text-white/80 tracking-[0.7px] whitespace-nowrap">jingyan.baidu.com</div>

  <!-- IME toolbar -->
  <div class="absolute left-[526px] top-[655px] w-[124px] h-[14px] bg-white/90 flex items-center pl-[6px] text-[#2a7fd4] text-[11px] leading-[14px]">
    <span class="w-[14px] font-bold text-center">中</span>
    <svg class="w-[14px] h-[11px]" viewBox="0 0 14 11" fill="#2a7fd4"><path d="M7 1.500a4 4 0 1 0 3 6.500A3.200 3.200 0 0 1 7 1.500z"/><circle cx="3" cy="3" r="1"/></svg>
    <svg class="ml-[2px] w-[13px] h-[13px]" viewBox="0 0 13 13" fill="none" stroke="#2a7fd4" stroke-width="1.100"><circle cx="6.500" cy="6.500" r="5.500"/><path d="M4 4.500h.5M8.500 4.500H9M4 8c1.500 1.500 3.500 1.500 5 0"/></svg>
    <svg class="ml-[3px] w-[11px] h-[13px]" viewBox="0 0 11 13" fill="none" stroke="#2a7fd4" stroke-width="1.200"><rect x="3.500" y=".5" width="4" height="8" rx="2" fill="#2a7fd4"/><path d="M1 6c0 5 9 5 9 0M5.500 10v2.500M3 12.500h5"/></svg>
    <svg class="ml-[4px] w-[11px] h-[11px]" viewBox="0 0 11 11" fill="none" stroke="#2a7fd4"><path d="M.5.500h10v10H.5zM3.500 3h1M7 3h1M3.500 5.500h1M7 5.500h1M3.500 8h4"/></svg>
    <svg class="ml-[4px] w-[11px] h-[11px]" viewBox="0 0 11 11" fill="#b9cde2"><circle cx="5.500" cy="3" r="2.500"/><path d="M1 11c0-3.500 2-5 4.500-5s4.500 1.500 4.500 5z"/></svg>
    <svg class="ml-[4px] w-[12px] h-[11px]" viewBox="0 0 12 11" fill="#1f78d1"><path d="M4 .5 0 2.500l1.500 3L3 5v5.500h6V5l1.500.5 1.500-3-4-2C7 2 5 2 4 .5z"/></svg>
    <svg class="ml-[3px] w-[11px] h-[11px]" viewBox="0 0 11 11" fill="#1f78d1"><path d="M0 0h5v5H0zM6 0h5v5H6zM0 6h5v5H0zM6 6h5v5H6z"/></svg>
  </div>
  <div class="absolute left-[512px] top-[654px] w-[18px] h-[19px] bg-[#f0623a] rounded-[3px] flex items-center justify-center text-white text-[14px] font-bold leading-[14px]">S</div>

  <!-- red touch marker -->
  <div class="absolute left-[3px] top-[681px] w-[22px] h-[22px] rounded-full bg-[#e8282d]/70"></div>
</div>
</body>
</html>
